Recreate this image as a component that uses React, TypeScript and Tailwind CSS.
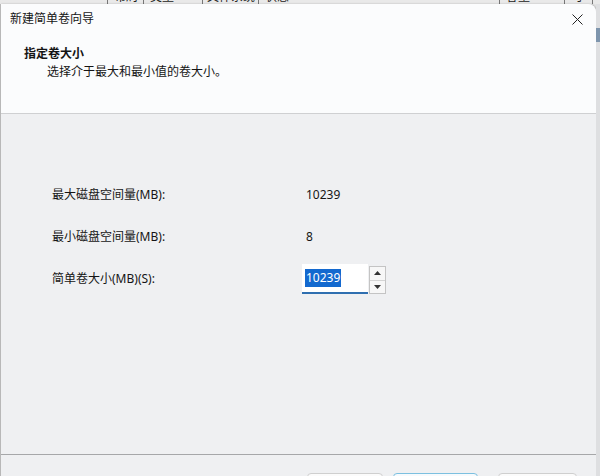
const font = "font-['Noto_Sans','Noto_Sans_CJK_SC',sans-serif]";

function SpinBox() {
  return (
    <div className="flex items-start">
      <div className="relative w-[66px] h-[30px] bg-white border-b-2 border-[#2f6fb0] flex items-center pl-[3px]">
        <span className="bg-[#1369cf] text-white leading-[18px] px-[1px]">10239</span>
      </div>
      <div className="ml-[1px] mt-[2px] w-[17px] h-[28px] flex flex-col border border-[#c4c4c4] bg-white">
        <div className="flex-1 flex items-center justify-center border-b border-[#d4d4d4] bg-[#f7f7f7]">
          <svg width="7" height="4" viewBox="0 0 7 4">
            <path d="M0 4 L3.5 0 L7 4 Z" fill="#333" />
          </svg>
        </div>
        <div className="flex-1 flex items-center justify-center bg-[#f7f7f7]">
          <svg width="7" height="4" viewBox="0 0 7 4">
            <path d="M0 0 L3.5 4 L7 0 Z" fill="#333" />
          </svg>
        </div>
      </div>
    </div>
  );
}

function Row({ label, children }: { label: string; children: React.ReactNode }) {
  return (
    <div className="flex h-[42px] items-center">
      <div className="w-[304px] shrink-0 pl-[51px]">{label}</div>
      <div className="flex-1">{children}</div>
    </div>
  );
}

export default function App() {
  return (
    <div className={`w-[600px] h-[476px] overflow-hidden flex flex-col bg-[#e4e4e4] text-[12px] text-[#151515] ${font}`}>
      {/* window behind the dialog, only its bottom edge shows */}
      <div className="h-[4px] overflow-hidden bg-[#e9e9e9] shrink-0">
        <div className="-mt-[11px] h-[16px] flex text-[12px] text-[#222] leading-[16px] whitespace-nowrap">
          <div className="w-[107px]" />
          <div className="w-[36px] border-l border-[#777] pl-[6px]">布局</div>
          <div className="w-[59px] border-l border-[#777] pl-[6px]">类型</div>
          <div className="w-[56px] border-l border-[#777] pl-[4px]">文件系统</div>
          <div className="w-[241px] border-l border-[#777] pl-[6px]">状态</div>
          <div className="w-[65px] border-l border-[#777] pl-[6px]">容量</div>
          <div className="w-[28px] border-l border-[#777] pl-[6px]">可</div>
          <div className="flex-1 border-l border-[#777]" />
        </div>
      </div>

      <div className="flex flex-1 min-h-0">
        {/* dialog */}
        <div className="w-[596px] flex flex-col rounded-tr-[8px] overflow-hidden border-l border-[#b8b8b8] bg-[#eff0f2] shadow-[1px_0_2px_rgba(0,0,0,0.25)]">
          <div className="bg-[#fbfcfd] h-[110px] flex flex-col border-b border-[#cfd0d2] shrink-0">
            <div className="h-[30px] flex items-center justify-between pl-[9px] pr-[13px]">
              <span>新建简单卷向导</span>
              <svg width="11" height="11" viewBox="0 0 11 11">
                <path d="M0.5 0.5 L10.5 10.5 M10.5 0.5 L0.5 10.5" stroke="#222" strokeWidth="1" />
              </svg>
            </div>
            <div className="pl-[23px] pt-[11px] leading-[18px]">
              <div className="font-bold">指定卷大小</div>
              <div className="pl-[23px]">选择介于最大和最小值的卷大小。</div>
            </div>
          </div>

          <div className="h-[341px] shrink-0 border-b border-[#a6a7a9] pt-[60px]">
            <Row label="最大磁盘空间量(MB):">
              <span className="pl-[1px]">10239</span>
            </Row>
            <Row label="最小磁盘空间量(MB):">
              <span className="pl-[1px]">8</span>
            </Row>
            <Row label="简单卷大小(MB)(S):">
              <div className="-ml-[3px]">
                <SpinBox />
              </div>
            </Row>
          </div>

          <div className="flex-1 flex items-start pt-[18px] pl-[306px] gap-[10px]">
            <div className="w-[76px] h-[24px] rounded-[4px] border border-[#cfcfcf] bg-[#fbfbfb]" />
            <div className="w-[85px] h-[24px] rounded-[4px] border border-[#7cc0e0] bg-[#f6fafd]" />
            <div className="w-[79px] h-[24px] rounded-[4px] border border-[#cfcfcf] bg-[#fbfbfb] ml-[10px]" />
          </div>
        </div>

        {/* edge of the window behind */}
        <div className="flex-1 flex flex-col bg-[#dedfe1]">
          <div className="h-[24px]" />
          <div className="h-[14px] bg-[#7e95ad]" />
        </div>
      </div>
    </div>
  );
}
